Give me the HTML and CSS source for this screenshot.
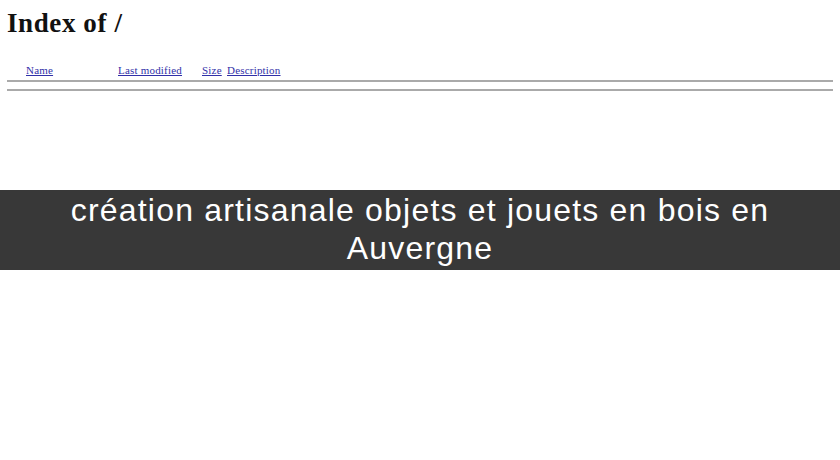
FILE: index.html
```html
<!DOCTYPE html>
<html>
<head>
  <meta charset="UTF-8">
  <title>Index of /</title>
  <link rel="stylesheet" href="styles.css">
</head>
<body>
  <h1>Index of /</h1>
  <table class="listing">
    <tr>
      <th class="icon"></th>
      <th class="name"><a href="#">Name</a></th>
      <th class="modified"><a href="#">Last modified</a></th>
      <th class="size"><a href="#">Size</a></th>
      <th class="desc"><a href="#">Description</a></th>
    </tr>
    <tr><th colspan="5"><hr></th></tr>
    <tr><th colspan="5"><hr></th></tr>
  </table>

  <div class="banner">création artisanale objets et jouets en bois en Auvergne</div>
</body>
</html>
```

FILE: styles.css
```css
body { font-family: 'Liberation Serif', serif; background: #fff; margin: 0; padding: 0 7px; color: #111; }
h1 { font-size: 27px; letter-spacing: 0.6px; margin: 0; padding-top: 8px; line-height: 30px; }
.listing { width: 100%; border-collapse: collapse; margin-top: 26px; font-size: 11px; letter-spacing: 0.2px; }
.listing th { font-weight: normal; text-align: left; padding: 0; }
.listing a { color: #3030a8; }
.listing .icon { width: 19px; }
.listing .name { width: 92px; }
.listing .modified { width: 84px; }
.listing .size { width: 25px; }
hr { border: 0; border-top: 2px solid #aaa; margin: 4px 0 3px; }
.banner { position: absolute; left: 0; right: 0; top: 190px; height: 80px; background: #383838; color: #fff; font-family: 'Liberation Sans', Arial, sans-serif; font-size: 32px; letter-spacing: 1.2px; line-height: 38px; text-align: center; padding: 1px 50px 0; box-sizing: border-box; }
```
